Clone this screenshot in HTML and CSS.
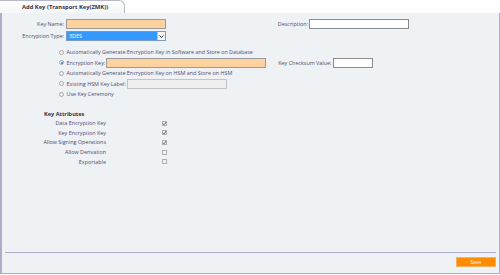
FILE: index.html
```html
<!DOCTYPE html>
<html lang="en">
<head>
    <meta charset="UTF-8">
    <title>Add Key</title>
    <link rel="stylesheet" href="styles.css">
</head>
<body>

    <div class="tab">Add Key (Transport Key(ZMK))</div>

    <div class="panel">
        <div class="form">
            <div class="row">
                <label class="lbl">Key Name:</label>
                <input type="text" class="field required">
                <label class="lbl lbl-desc">Description:</label>
                <input type="text" class="field">
            </div>
            <div class="row">
                <label class="lbl">Encryption Type:</label>
                <div class="select">
                    <span>3DES</span>
                    <span class="arrow">
                        <svg width="7" height="7" viewBox="0 0 7 7"><path d="M1.5 2.5 L3.5 4.5 L5.5 2.5" fill="none" stroke="#333" stroke-width="1"/></svg>
                    </span>
                </div>
            </div>

            <div class="options">
                <div class="opt"><span class="radio"></span>Automatically Generate Encryption Key in Software and Store on Database</div>
                <div class="opt">
                    <span class="radio on"></span>Encryption Key:
                    <input type="text" class="field required wide">
                    <span class="checksum">Key Checksum Value:</span>
                    <input type="text" class="field short">
                </div>
                <div class="opt"><span class="radio"></span>Automatically Generate Encryption Key on HSM and Store on HSM</div>
                <div class="opt"><span class="radio"></span>Existing HSM Key Label:<input type="text" class="field grey" disabled></div>
                <div class="opt"><span class="radio"></span>Use Key Ceremony</div>
            </div>

            <div class="attrs">
                <h4>Key Attributes</h4>
                <div class="attr"><span class="name">Data Encryption Key</span><span class="box checked"><svg width="5" height="5" viewBox="0 0 5 5"><path d="M0.8 2.6 L2 3.8 L4.3 1" fill="none" stroke="#555" stroke-width="0.9"/></svg></span></div>
                <div class="attr"><span class="name">Key Encryption Key</span><span class="box checked"><svg width="5" height="5" viewBox="0 0 5 5"><path d="M0.8 2.6 L2 3.8 L4.3 1" fill="none" stroke="#555" stroke-width="0.9"/></svg></span></div>
                <div class="attr"><span class="name">Allow Signing Operations</span><span class="box checked"><svg width="5" height="5" viewBox="0 0 5 5"><path d="M0.8 2.6 L2 3.8 L4.3 1" fill="none" stroke="#555" stroke-width="0.9"/></svg></span></div>
                <div class="attr"><span class="name">Allow Derivation</span><span class="box"></span></div>
                <div class="attr"><span class="name">Exportable</span><span class="box"></span></div>
            </div>
        </div>

        <div class="footer">
            <button class="save">Save</button>
        </div>
    </div>

</body>
</html>
```

FILE: styles.css
```css
body {
    margin: 0;
    width: 500px;
    height: 274px;
    font-family: "Open Sans", Arial, sans-serif;
    font-size: 5.4px;
    color: #4c4c72;
    background-color: #ffffff;
    display: flex;
    flex-direction: column;
}

.tab {
    width: 102px;
    height: 12px;
    padding-left: 22px;
    line-height: 13px;
    font-weight: bold;
    font-size: 5.8px;
    color: #333348;
    background: linear-gradient(#ffffff, #f4f6f8);
    border: 1px solid #b8b8cc;
    border-bottom: none;
    border-left: none;
    border-top-right-radius: 6px;
}

.panel {
    flex: 1;
    display: flex;
    flex-direction: column;
    background-color: #eff2f4;
    border: 1px solid #adadc9;
    border-top: none;
    border-left-width: 2px;
}

.form {
    flex: 1;
    padding-top: 6px;
}

.row {
    display: flex;
    align-items: center;
    height: 10px;
    margin-bottom: 2px;
}

.lbl {
    width: 62px;
    text-align: right;
    padding-right: 2px;
}

.lbl-desc {
    width: 142px;
    padding-right: 1px;
}

.field {
    box-sizing: border-box;
    width: 100px;
    height: 10px;
    padding: 0;
    margin: 0;
    border: 1px solid #8c8c8c;
    background-color: #ffffff;
    font-size: 5.4px;
}

.field.required {
    background-color: #fcd29f;
    border-color: #9a9a9a;
}

.field.grey {
    background-color: #f0f0f0;
    border-color: #c4c4c4;
}

.select {
    box-sizing: border-box;
    width: 100px;
    height: 10px;
    display: flex;
    align-items: center;
    justify-content: space-between;
    background-color: #3399ff;
    color: #ffffff;
    border: 1px solid #7a9cc4;
    padding-left: 2px;
}

.arrow {
    width: 7px;
    height: 8px;
    display: flex;
    align-items: center;
    justify-content: center;
    background-color: #f4f4f4;
    border-left: 1px solid #c4c4c4;
}

.options {
    padding-top: 4px;
    padding-left: 57px;
}

.opt {
    display: flex;
    align-items: center;
    height: 10.5px;
}

.radio {
    box-sizing: border-box;
    width: 5px;
    height: 5px;
    border-radius: 50%;
    border: 1px solid #a8a8a8;
    background-color: #f4f4f4;
    margin-right: 2.5px;
    position: relative;
}

.radio.on::after {
    content: "";
    position: absolute;
    left: 0.5px;
    top: 0.5px;
    width: 2px;
    height: 2px;
    border-radius: 50%;
    background-color: #3a7ad0;
}

.opt .field {
    margin-left: 1px;
}

.field.wide {
    width: 160px;
}

.field.short {
    width: 40px;
}

.checksum {
    margin-left: 12px;
    margin-right: 1px;
}

.attrs {
    padding-top: 10px;
    padding-left: 42px;
}

.attrs h4 {
    margin: 0 0 1px;
    font-size: 5.6px;
    color: #333348;
}

.attr {
    display: flex;
    align-items: center;
    height: 9.6px;
    margin-left: -42px;
}

.name {
    width: 104px;
    text-align: right;
}

.box {
    box-sizing: border-box;
    width: 5px;
    height: 5px;
    margin-left: 56px;
    border: 1px solid #b0b0b0;
    background-color: #f2f2f2;
    display: flex;
    align-items: center;
    justify-content: center;
}

.box svg {
    flex: none;
}

.footer {
    margin: 0 3px 6px 3px;
    border-top: 1px solid #adadc9;
    padding-top: 4px;
    display: flex;
    justify-content: flex-end;
}

.save {
    width: 40px;
    height: 10px;
    padding: 0;
    background-color: #ff8c00;
    color: #ffffff;
    font-family: "Open Sans", Arial, sans-serif;
    font-size: 5px;
    border: 1px solid #f7b060;
    cursor: pointer;
}
```
